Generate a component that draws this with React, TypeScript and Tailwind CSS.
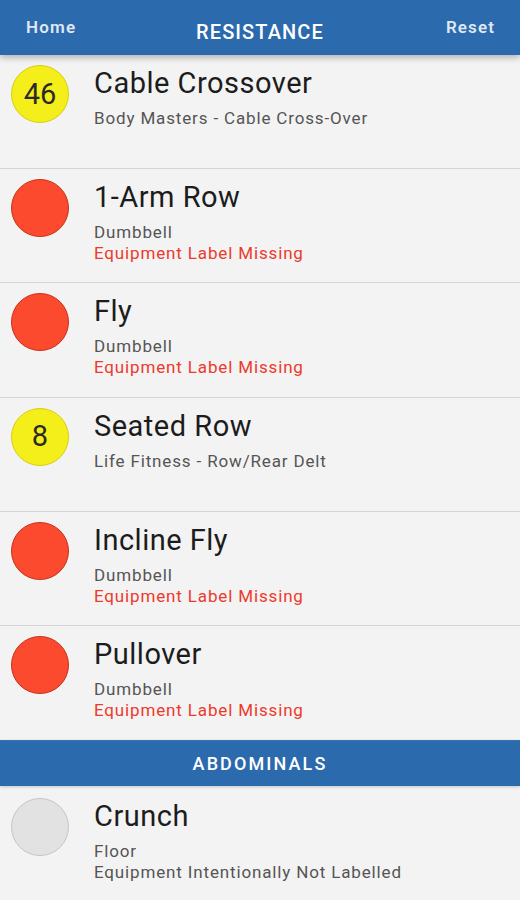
import React from "react";

type Item = {
  title: string;
  sub: string;
  note?: string;
  noteRed?: boolean;
  kind: "yellow" | "red" | "gray";
  num?: string;
};

const items: Item[] = [
  { title: "Cable Crossover", sub: "Body Masters - Cable Cross-Over", kind: "yellow", num: "46" },
  { title: "1-Arm Row", sub: "Dumbbell", note: "Equipment Label Missing", noteRed: true, kind: "red" },
  { title: "Fly", sub: "Dumbbell", note: "Equipment Label Missing", noteRed: true, kind: "red" },
  { title: "Seated Row", sub: "Life Fitness - Row/Rear Delt", kind: "yellow", num: "8" },
  { title: "Incline Fly", sub: "Dumbbell", note: "Equipment Label Missing", noteRed: true, kind: "red" },
  { title: "Pullover", sub: "Dumbbell", note: "Equipment Label Missing", noteRed: true, kind: "red" },
];

function Circle({ kind, num }: { kind: Item["kind"]; num?: string }) {
  const cls =
    kind === "yellow"
      ? "bg-[#f4ee1a] border-[#d8cf10]"
      : kind === "red"
      ? "bg-[#fb4a2e] border-[#c8311d]"
      : "bg-[#e2e2e2] border-[#c6c6c6]";
  return (
    <div
      className={`w-[58px] h-[58px] rounded-full border flex items-center justify-center shrink-0 text-[29px] text-[#2a2a2a] leading-none ${cls}`}
    >
      {num}
    </div>
  );
}

function Row({ item, last, top = "pt-[10px]" }: { item: Item; last?: boolean; top?: string }) {
  return (
    <div
      className={`flex h-[114.2px] pl-[11px] ${top} gap-[25px] bg-[#f3f3f3] ${
        last ? "" : "border-b border-[#d4d4d4]"
      }`}
    >
      <Circle kind={item.kind} num={item.num} />
      <div className="flex flex-col pt-[1px]">
        <div className="text-[29px] leading-[34px] tracking-[0.5px] text-[#1c1c1c]">{item.title}</div>
        <div className="mt-[8px] text-[17px] leading-[21px] tracking-[0.85px] text-[#555555]">{item.sub}</div>
        {item.note && (
          <div
            className={`text-[17px] leading-[21px] tracking-[0.85px] ${
              item.noteRed ? "text-[#ec3a2c]" : "text-[#555555]"
            }`}
          >
            {item.note}
          </div>
        )}
      </div>
    </div>
  );
}

export default function App() {
  return (
    <div
      className="w-[520px] h-[900px] overflow-hidden bg-[#f3f3f3]"
      style={{ fontFamily: "Roboto, 'Liberation Sans', sans-serif" }}
    >
      <div className="relative z-10 h-[55px] bg-[#2c6aae] shadow-[0_3px_6px_rgba(0,0,0,0.25)] grid grid-cols-[1fr_auto_1fr] text-[#dfe7f1]">
        <div className="pl-[26px] pt-[15px] text-[17px] font-semibold tracking-[1.2px]">Home</div>
        <div className="pt-[17px] text-[20px] font-medium tracking-[1.1px] text-white">RESISTANCE</div>
        <div className="pr-[25px] pt-[15px] text-[17px] font-semibold tracking-[1.1px] text-right">Reset</div>
      </div>
      {items.map((it, i) => (
        <Row key={i} item={it} last={i === items.length - 1} />
      ))}
      <div className="h-[46px] bg-[#2c6aae] flex items-center justify-center text-white text-[18px] font-medium tracking-[2.1px] border-t border-[#3a73b4] shadow-[0_1px_3px_rgba(0,0,0,0.2)] relative z-10">
        ABDOMINALS
      </div>
      <Row
        item={{
          title: "Crunch",
          sub: "Floor",
          note: "Equipment Intentionally Not Labelled",
          kind: "gray",
        }}
        last
        top="pt-[12px]"
      />
    </div>
  );
}
